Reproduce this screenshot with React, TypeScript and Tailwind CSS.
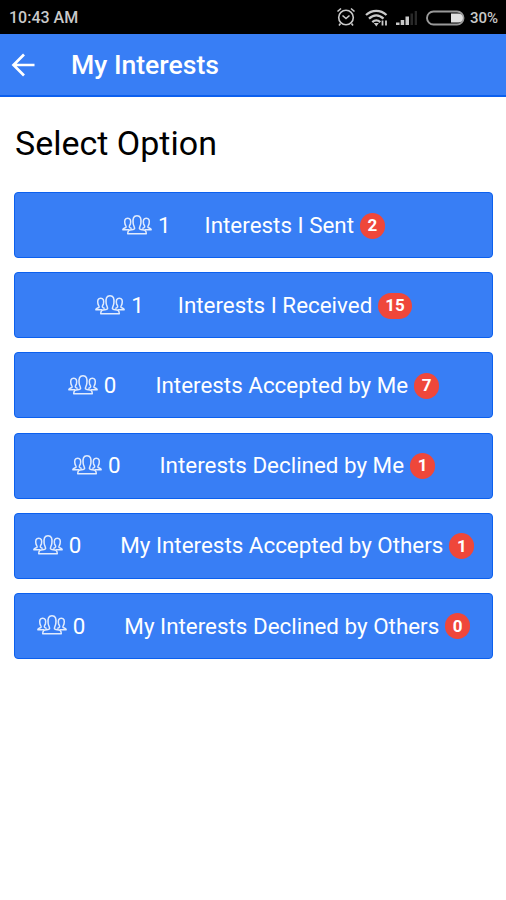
const options = [
  { label: 'Interests I Sent', people: 1, badge: 2, gap: 'ml-[34px]' },
  { label: 'Interests I Received', people: 1, badge: 15, gap: 'ml-[34px]' },
  { label: 'Interests Accepted by Me', people: 0, badge: 7, gap: 'ml-[39px]' },
  { label: 'Interests Declined by Me', people: 0, badge: 1, gap: 'ml-[39px]' },
  { label: 'My Interests Accepted by Others', people: 0, badge: 1, gap: 'ml-[39px]' },
  { label: 'My Interests Declined by Others', people: 0, badge: 0, gap: 'ml-[39px]' },
];

function PeopleIcon() {
  return (
    <svg className="mr-[6px] mb-[2px] shrink-0 opacity-85" width="30" height="22" viewBox="0 0 30 22" fill="none" stroke="currentColor" strokeWidth="1.5" strokeLinejoin="round">
      <path d="M12.600 14.500c0-1.800-1.200-2.700-1.500-5.500C10.700 4.500 11.500 1.700 15 1.700s4.300 2.800 3.900 7.300c-.3 2.800-1.500 3.700-1.500 5.500.1 1.700 3.600 1 5.600 1.800.9.500 1.300 1.600 1.300 3.400H5.700c0-1.800.4-2.900 1.300-3.400 2-.8 5.500-.1 5.600-1.800z" />
      <path d="M7 15.700H.8c.2-2 2.700-1.400 3.300-2.600.3-.8-.9-1.900-1.200-3.600-.6-3.100.2-5.300 2.800-5.300s3.400 2.200 2.800 5.300c-.4 1.700-1.500 2.400-1.100 3.500.3.900 1.100 1.100 2.300 1.400" />
      <path d="M23 15.700h6.200c-.2-2-2.700-1.400-3.300-2.600-.3-.8.9-1.900 1.200-3.600.6-3.100-.2-5.300-2.800-5.300s-3.400 2.200-2.800 5.300c.4 1.700 1.500 2.400 1.100 3.500-.3.900-1.100 1.100-2.300 1.400" />
    </svg>
  );
}

function StatusBar() {
  return (
    <div className="flex h-[34px] items-center bg-black pt-px pr-2 pl-[9px] text-[#c9c9c9]">
      <span className="pt-px text-[16px] font-medium">10:43 AM</span>
      <svg className="mb-px ml-auto" width="20" height="20" viewBox="0 0 20 20" fill="none" stroke="currentColor" strokeWidth="1.6">
        <circle cx="10" cy="10.500" r="7.300" />
        <path d="M1.500 4.500 5 1.500M18.500 4.500 15 1.500M6.500 8.500l3.500 3 3.500-3M4.500 16.500 3 18.500M15.500 16.500l1.500 2" />
      </svg>
      <svg className="ml-[9px]" width="24" height="18" viewBox="0 0 24 18" fill="none" stroke="currentColor" strokeWidth="2.300">
        <path d="M1 6c6-5.500 14.500-5.500 20.500 0M4 9.700c4.500-4.300 10-4.300 14.500 0M7.300 13.200c2.500-2.300 5.500-2.300 8 0" />
        <path d="M8.800 14h5l-2.500 3.500z" fill="currentColor" stroke="none" />
        <path d="M17.500 11.500v5M21 11.500v5" strokeWidth="1.800" />
      </svg>
      <svg className="ml-[7px]" width="22" height="16" viewBox="0 0 22 16" fill="currentColor">
        <path d="M0 12.500h3.500V15H0zM4.700 10h3.500v5H4.700zM9.500 6.500H13V15H9.500z" />
        <path d="M14.500 3.500H17V15h-2.500zM18.700 1h2.300v14h-2.300z" fill="#292929" />
      </svg>
      <svg className="ml-[8px]" width="40" height="16" viewBox="0 0 40 16" fill="none" stroke="currentColor" strokeWidth="1.900">
        <rect x="1" y="1.500" width="36.500" height="13" rx="6.500" stroke="#999" />
        <path d="M25 3.500h7.500a4.500 4.500 0 0 1 0 9H25z" fill="#e0e0e0" stroke="none" />
      </svg>
      <span className="ml-[4px] pt-px text-[15px] font-medium">30%</span>
    </div>
  );
}

export default function App() {
  return (
    <div className="h-[900px] w-full overflow-hidden bg-white font-['Roboto',sans-serif]">
      <StatusBar />
      <header className="flex h-[63px] items-center border-b-2 border-[#0c60ee] bg-[#387ef5] pl-[11px] text-white">
        <svg width="24" height="24" viewBox="0 0 24 24" fill="none" stroke="currentColor" strokeWidth="2.700">
          <path d="M23.500 12H2.500M13 1.500 2.500 12 13 22.500" />
        </svg>
        <h1 className="ml-[36px] text-[26.600px] font-medium">My Interests</h1>
      </header>
      <main className="pt-[26px] pr-[13px] pl-[14px]">
        <h2 className="pl-px text-[34px] leading-[40px] text-black">Select Option</h2>
        <div className="mt-[29px] flex flex-col gap-[14.200px]">
          {options.map((option) => (
            <button
              key={option.label}
              className="flex h-[66px] w-full items-center justify-center rounded-[4px] border-[1.500px] border-[#0c60ee] bg-[#387ef5] pt-px text-[22.400px] whitespace-nowrap text-white"
            >
              <PeopleIcon />
              <span>{option.people}</span>
              <span className={option.gap}>{option.label}</span>
              <span className="ml-[6px] flex h-[26px] min-w-[25px] items-center justify-center rounded-full bg-[#ef473a] px-[7px] text-[17px] font-bold">
                {option.badge}
              </span>
            </button>
          ))}
        </div>
      </main>
    </div>
  );
}
